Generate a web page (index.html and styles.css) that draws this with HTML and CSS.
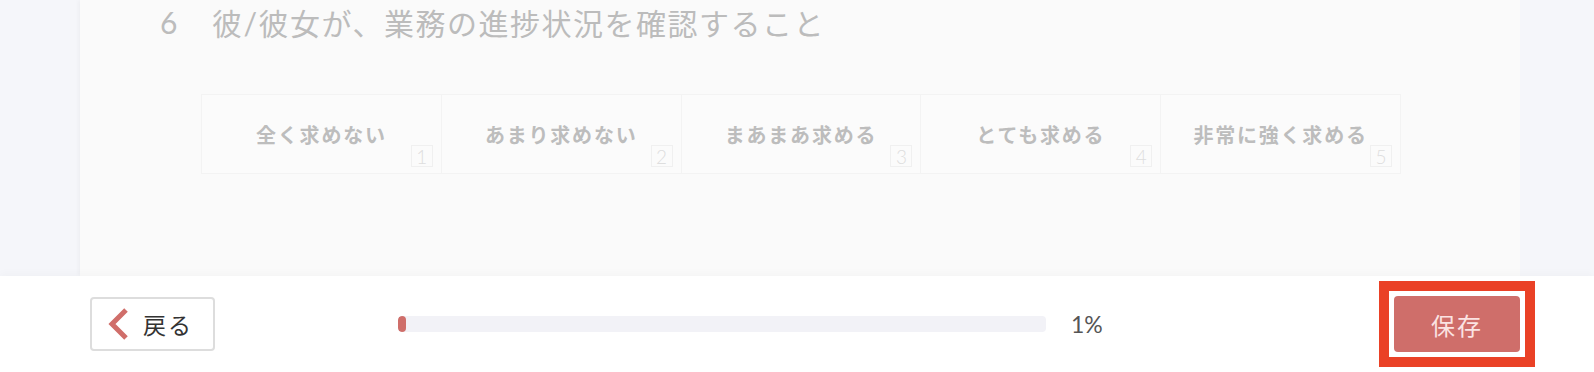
FILE: index.html
```html
<!DOCTYPE html>
<html lang="ja">
<head>
  <meta charset="UTF-8" />
  <meta name="viewport" content="width=device-width, initial-scale=1.0"/>
  <title>アンケート</title>
  <link rel="stylesheet" href="styles.css">
</head>
<body>
  <div class="page">
    <div class="card">
      <div class="question">
        <span class="q-no">6</span>
        <span class="q-text">彼/彼女が、業務の進捗状況を確認すること</span>
      </div>

      <div class="choices">
        <div class="choice"><span class="label">全く求めない</span><span class="key">1</span></div>
        <div class="choice"><span class="label">あまり求めない</span><span class="key">2</span></div>
        <div class="choice"><span class="label">まあまあ求める</span><span class="key">3</span></div>
        <div class="choice"><span class="label">とても求める</span><span class="key">4</span></div>
        <div class="choice"><span class="label">非常に強く求める</span><span class="key">5</span></div>
      </div>
    </div>
  </div>

  <footer>
    <button class="back">
      <svg width="20" height="32" viewBox="0 0 20 32">
        <polyline points="18,2 4,16 18,30" fill="none" stroke="#d06e6a" stroke-width="5"/>
      </svg>
      <span>戻る</span>
    </button>

    <div class="progress">
      <div class="track"><div class="fill" style="width: 1%"></div></div>
      <span class="percent">1%</span>
    </div>

    <div class="highlight">
      <button class="save">保存</button>
    </div>
  </footer>
</body>
</html>
```

FILE: styles.css
```css
:root {
  --accent: #cf6e6a;
  --page-bg: #f5f6fa;
  --card-bg: #fafafa;
  --muted: #bdbdbd;
}

* {
  box-sizing: border-box;
  margin: 0;
  padding: 0;
  font-family: Lato, "Noto Sans CJK JP", sans-serif;
}

body {
  background-color: var(--page-bg);
  width: 1594px;
  height: 372px;
  overflow: hidden;
}

.page {
  height: 276px;
  overflow: hidden;
}

.card {
  margin: 0 74px 0 80px;
  height: 276px;
  background-color: var(--card-bg);
  box-shadow: -2px 0 4px rgba(0, 0, 40, 0.03);
}

.question {
  display: flex;
  align-items: center;
  height: 44px;
  padding-left: 80px;
  color: #bcbcbc;
  font-size: 30px;
  font-weight: normal;
}

.q-no {
  width: 52px;
}

.q-text {
  letter-spacing: 1.5px;
}

.choices {
  display: flex;
  width: 1200px;
  margin: 50px 0 0 121px;
  border-top: 1px solid #f3f3f3;
  border-bottom: 1px solid #f3f3f3;
  border-left: 1px solid #f3f3f3;
}

.choice {
  position: relative;
  width: 240px;
  height: 78px;
  display: flex;
  align-items: center;
  justify-content: center;
  border-right: 1px solid #f3f3f3;
  background-color: #fbfbfb;
}

.choice .label {
  font-size: 20px;
  font-weight: bold;
  color: var(--muted);
  letter-spacing: 1.8px;
}

.choice .key {
  position: absolute;
  right: 8px;
  bottom: 6px;
  width: 22px;
  height: 22px;
  border: 1px solid #f0f0f0;
  display: flex;
  align-items: center;
  justify-content: center;
  font-size: 19px;
  font-weight: 300;
  color: #dedede;
}

footer {
  height: 96px;
  background-color: #ffffff;
  display: flex;
  align-items: center;
  padding-left: 90px;
  box-shadow: 0 -3px 8px rgba(0, 0, 0, 0.025);
  position: relative;
}

.back {
  width: 125px;
  height: 54px;
  display: flex;
  align-items: center;
  padding-left: 16px;
  gap: 15px;
  background: #ffffff;
  border: 2px solid #dddddd;
  border-radius: 4px;
  cursor: pointer;
}

.back span {
  font-size: 23px;
  color: #333333;
  letter-spacing: 2px;
}

.progress {
  display: flex;
  align-items: center;
  margin-left: 183px;
}

.track {
  width: 648px;
  height: 16px;
  background-color: #f2f2f7;
  border-radius: 4px;
  overflow: hidden;
}

.fill {
  min-width: 8px;
  height: 100%;
  background-color: var(--accent);
  border-radius: 4px;
}

.percent {
  margin-left: 25px;
  font-size: 23px;
  color: #555555;
}

.highlight {
  margin-left: auto;
  margin-right: 59px;
  padding: 5px;
  border: 10px solid #ea4126;
  display: flex;
}

.save {
  width: 126px;
  height: 56px;
  background-color: var(--accent);
  color: #fbe3e2;
  border: none;
  border-radius: 4px;
  font-size: 24px;
  letter-spacing: 2px;
  cursor: pointer;
}
```
